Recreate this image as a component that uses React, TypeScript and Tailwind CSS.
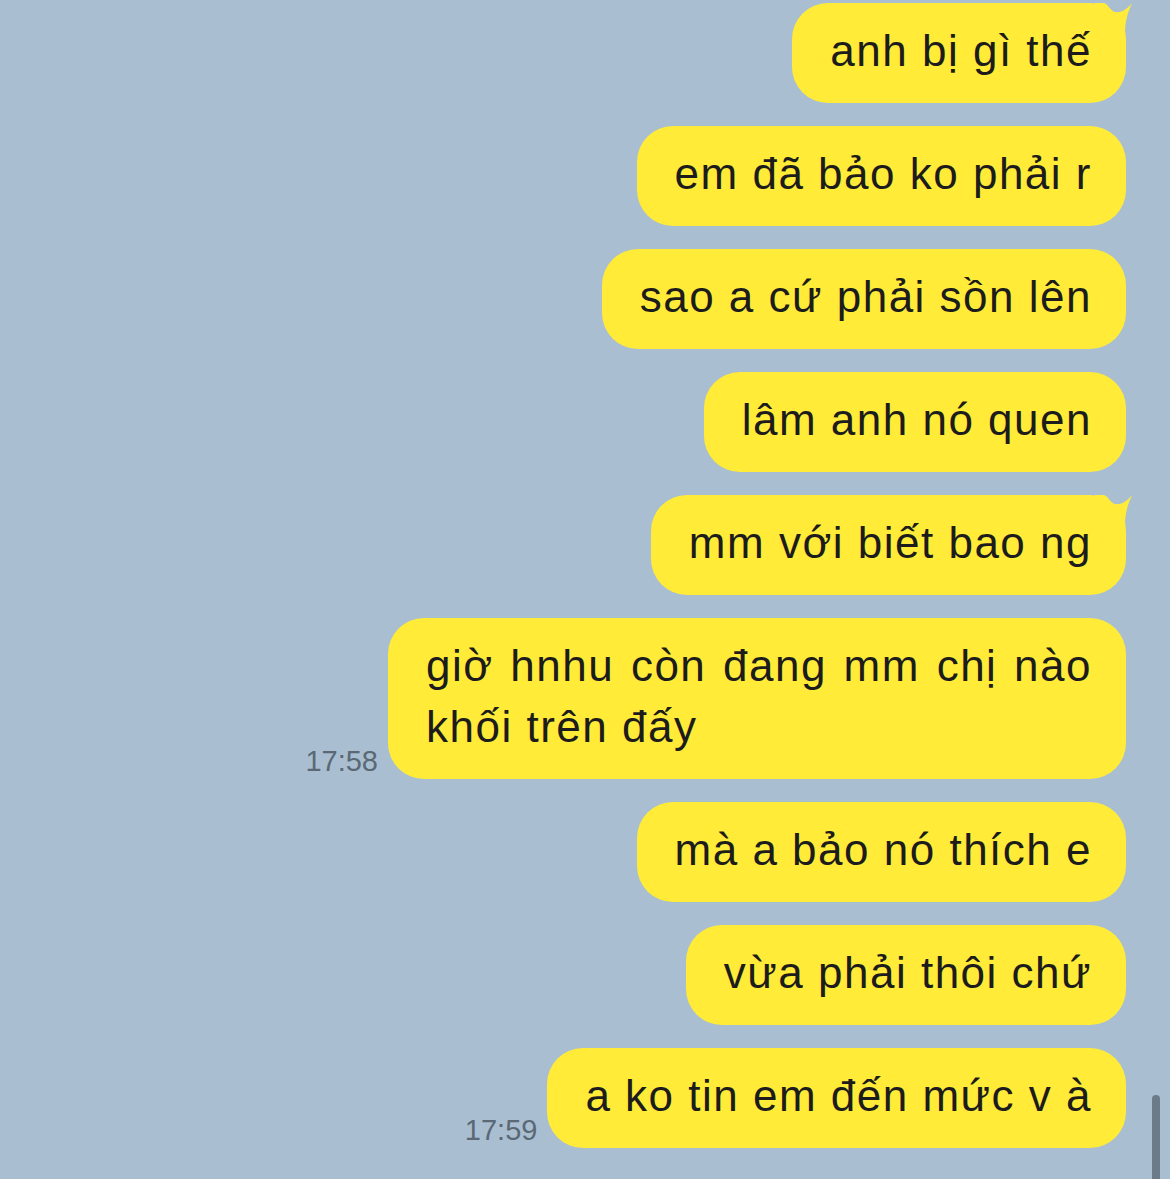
import React from "react";

type Msg = { text: string; tail?: boolean; time?: string };

const messages: Msg[] = [
  { text: "anh bị gì thế", tail: true },
  { text: "em đã bảo ko phải r" },
  { text: "sao a cứ phải sồn lên" },
  { text: "lâm anh nó quen" },
  { text: "mm với biết bao ng", tail: true },
  { text: "giờ hnhu còn đang mm chị nào khối trên đấy", time: "17:58" },
  { text: "mà a bảo nó thích e" },
  { text: "vừa phải thôi chứ" },
  { text: "a ko tin em đến mức v à", time: "17:59" },
];

function Tail() {
  return (
    <svg
      className="absolute top-0 right-[-6px]"
      width="37"
      height="40"
      viewBox="0 0 37 40"
    >
      <path
        d="M0,0 H8 C13,0 15,8 20,9 C27,10 32,6 37,0 C33,9 30,18 30,30 V40 H0 Z"
        fill="#ffeb38"
      />
    </svg>
  );
}

function Bubble({ msg }: { msg: Msg }) {
  return (
    <div className="flex items-end gap-[10px]">
      {msg.time && (
        <span className="mb-[3px] text-[29px] leading-[29px] text-[#5b6875]">
          {msg.time}
        </span>
      )}
      <div className="relative max-w-[738px] rounded-[36px] bg-[#ffeb38] pl-[38px] pr-[34px] pt-[17px] pb-[22px] text-justify text-[44px] leading-[61px] tracking-[1.5px] text-[#1c1c1c]">
        {msg.tail && <Tail />}
        <span className="relative">{msg.text}</span>
      </div>
    </div>
  );
}

export default function App() {
  return (
    <div
      className="relative h-[1179px] w-[1170px] overflow-hidden bg-[#a9bfd1]"
      style={{ fontFamily: '"Liberation Sans", Arial, sans-serif' }}
    >
      <div className="flex flex-col items-end gap-[23px] pt-[3px] pr-[44px]">
        {messages.map((m, i) => (
          <Bubble key={i} msg={m} />
        ))}
      </div>
      <div className="absolute left-[1152px] top-[1095px] h-[100px] w-[8px] rounded-full bg-[#6c7b88]" />
    </div>
  );
}
